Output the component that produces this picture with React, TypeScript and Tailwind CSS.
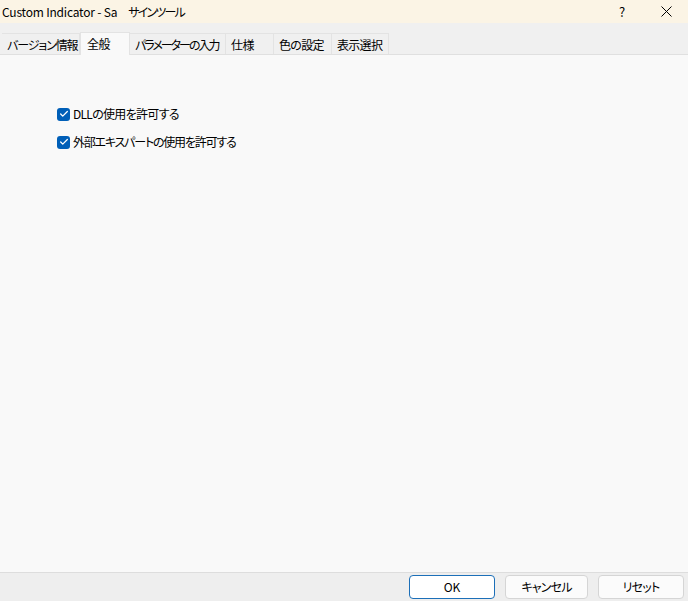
import { Check } from "lucide-react"

const tabs = [
  { t: "バージョン情報", w: "w-[78px]", tr: "tracking-[-1.1px]" },
  { t: "全般", w: "w-[50px]", tr: "tracking-[-0.5px]" },
  { t: "パラメーターの入力", w: "w-[96px]", tr: "tracking-[-2px]" },
  { t: "仕様", w: "w-[48px]", tr: "tracking-[-0.5px]" },
  { t: "色の設定", w: "w-[58px]", tr: "tracking-[-0.7px]" },
  { t: "表示選択", w: "w-[57px]", tr: "tracking-[-0.7px]" },
]

const Box = ({ label, tr }: { label: string; tr: string }) => (
  <label className="flex items-center gap-[3px] h-[16px]">
    <span className="w-[13px] h-[13px] rounded-[3px] bg-[#005fb8] flex items-center justify-center">
      <Check className="w-[10px] h-[10px] text-white" strokeWidth={3} />
    </span>
    <span className={`text-[12px] text-black whitespace-nowrap ${tr}`}>{label}</span>
  </label>
)

export default function App() {
  const font = {
    fontFamily: '"Segoe UI", "Noto Sans CJK JP", "Noto Sans", sans-serif',
    fontFeatureSettings: '"palt"',
  }
  return (
    <div className="w-[688px] h-[601px] flex flex-col bg-[#f9f9f9] overflow-hidden" style={font}>
      <div className="h-[23px] bg-[#fbf4e5] flex items-center text-[12px] text-black">
        <span className="pl-[2px] flex-1 whitespace-nowrap">
          <span className="tracking-[-0.2px]">Custom Indicator - Sa</span>
          <span className="tracking-[-1.8px] pl-[11px]">サインツール</span>
        </span>
        <span className="w-[44px] text-center text-[13px]">?</span>
        <span className="w-[44px] flex justify-center">
          <svg width="11" height="11" viewBox="0 0 11 11" stroke="#000" strokeWidth="1">
            <path d="M0.5 0.5 L10.5 10.5 M10.5 0.5 L0.5 10.5" />
          </svg>
        </span>
      </div>
      <div className="h-[32px] bg-[#f0f0f0] flex items-end pl-[2px] border-b border-[#e0e0e0]">
        {tabs.map((x, i) =>
          i === 1 ? (
            <div
              key={x.t}
              className={`${x.w} ${x.tr} h-[23px] -mb-px bg-[#f9f9f9] border-t border-x border-[#e3e3e3] text-[12px] pl-[6px] pt-[2px] whitespace-nowrap overflow-hidden`}
            >
              {x.t}
            </div>
          ) : (
            <div
              key={x.t}
              className={`${x.w} ${x.tr} h-[21px] border-t border-r border-[#e3e3e3] text-[12px] pl-[5px] pt-[2px] bg-[#f0f0f0] whitespace-nowrap overflow-hidden`}
            >
              {x.t}
            </div>
          )
        )}
      </div>
      <div className="flex-1 pl-[57px] pt-[51px] flex flex-col gap-[12px]">
        <Box label="DLLの使用を許可する" tr="tracking-[-0.7px]" />
        <Box label="外部エキスパートの使用を許可する" tr="tracking-[-1.2px]" />
      </div>
      <div className="h-[29px] bg-[#eeeeee] border-t border-[#dddddd] flex items-center justify-end gap-[10px] pr-[4px]">
        <button className="w-[86px] h-[24px] rounded-[4px] border border-[#1c6fb8] bg-white text-[12px]">OK</button>
        <button className="w-[83px] h-[24px] rounded-[4px] border border-[#d5d5d5] bg-[#fbfbfb] text-[12px] tracking-[-0.8px]">キャンセル</button>
        <button className="w-[86px] h-[24px] rounded-[4px] border border-[#d5d5d5] bg-[#fbfbfb] text-[12px] tracking-[-0.8px]">リセット</button>
      </div>
    </div>
  )
}
